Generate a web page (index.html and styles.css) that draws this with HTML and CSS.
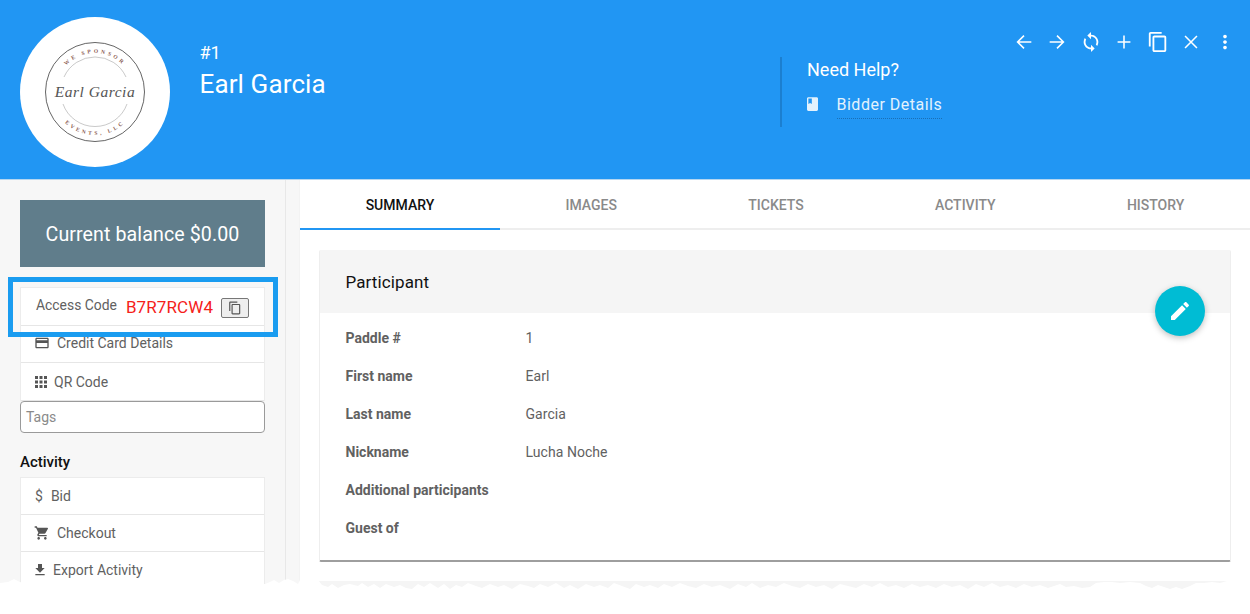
FILE: index.html
```html
<!DOCTYPE html>
<html lang="en">
<head>
<meta charset="utf-8">
<title>Earl Garcia</title>
<link rel="stylesheet" href="styles.css">
</head>
<body>
<div class="page">
  <header class="header">
    <div class="avatar">
      <svg class="logo" viewBox="0 0 100 100" width="100" height="100">
        <defs>
          <path id="arcTop" d="M11 50a39 39 0 0 1 78 0"/>
          <path id="arcBottom" d="M7 50a43 43 0 0 0 86 0"/>
        </defs>
        <circle class="logo-ring" cx="50" cy="50" r="49.500"/>
        <path class="logo-thin" d="M19 35a34 34 0 0 1 62 0M18 62a34 34 0 0 0 64 0"/>
        <text class="logo-small"><textPath href="#arcTop" startOffset="50%" text-anchor="middle">WE SPONSOR</textPath></text>
        <text class="logo-small"><textPath href="#arcBottom" startOffset="50%" text-anchor="middle">EVENTS, LLC</textPath></text>
        <text class="logo-script" x="50" y="55" text-anchor="middle">Earl Garcia</text>
      </svg>
    </div>
    <div class="identity">
      <div class="paddle">#1</div>
      <h1 class="name">Earl Garcia</h1>
    </div>
    <div class="help">
      <div class="help-title">Need Help?</div>
      <div class="help-link">
        <svg class="book" viewBox="4 2 16 20" width="11" height="14"><path d="M18 2H6c-1.100 0-2 .9-2 2v16c0 1.100.9 2 2 2h12c1.100 0 2-.9 2-2V4c0-1.100-.9-2-2-2zM6 4h5v8l-2.500-1.500L6 12V4z" fill="currentColor" fill-rule="evenodd"/></svg>
        <span class="link-text">Bidder Details</span>
      </div>
    </div>
    <nav class="toolbar">
      <svg class="tool" viewBox="0 0 24 24"><path class="tool-line" d="M20 12H5M12 5l-7 7 7 7"/></svg>
      <svg class="tool" viewBox="0 0 24 24"><path class="tool-line" d="M4 12h15M12 5l7 7-7 7"/></svg>
      <svg class="tool" viewBox="0 0 24 24"><path class="tool-fill" d="M12 4V1L8 5l4 4V6c3.310 0 6 2.690 6 6 0 1.010-.25 1.970-.7 2.800l1.460 1.460C19.540 15.030 20 13.570 20 12c0-4.420-3.580-8-8-8zm0 14c-3.310 0-6-2.690-6-6 0-1.010.25-1.970.7-2.800L5.240 7.740C4.460 8.970 4 10.430 4 12c0 4.420 3.580 8 8 8v3l4-4-4-4v3z"/></svg>
      <svg class="tool" viewBox="0 0 24 24"><path class="tool-line" d="M12 5v14M5 12h14"/></svg>
      <svg class="tool" viewBox="0 0 24 24"><path class="tool-fill" d="M16 1H4c-1.100 0-2 .9-2 2v14h2V3h12V1zm3 4H8c-1.100 0-2 .9-2 2v14c0 1.100.9 2 2 2h11c1.100 0 2-.9 2-2V7c0-1.100-.9-2-2-2zm0 16H8V7h11v14z"/></svg>
      <svg class="tool" viewBox="0 0 24 24"><path class="tool-line" d="M5.500 5.500l13 13M18.500 5.500l-13 13"/></svg>
      <svg class="tool" viewBox="0 0 24 24"><path class="tool-fill" d="M12 8c1.100 0 2-.9 2-2s-.9-2-2-2-2 .9-2 2 .9 2 2 2zm0 2c-1.100 0-2 .9-2 2s.9 2 2 2 2-.9 2-2-.9-2-2-2zm0 6c-1.100 0-2 .9-2 2s.9 2 2 2 2-.9 2-2-.9-2-2-2z"/></svg>
    </nav>
  </header>

  <div class="body">
    <aside class="sidebar">
      <div class="side-inner">
        <div class="balance">Current balance $0.00</div>
        <ul class="list first-list">
          <li class="item code-item">
            <span class="code-label">Access Code</span>
            <span class="code">B7R7RCW4</span>
            <button class="copy" type="button" aria-label="Copy">
              <svg viewBox="0 0 24 24" width="14" height="14"><path d="M16 1H4c-1.100 0-2 .9-2 2v14h2V3h12V1zm3 4H8c-1.100 0-2 .9-2 2v14c0 1.100.9 2 2 2h11c1.100 0 2-.9 2-2V7c0-1.100-.9-2-2-2zm0 16H8V7h11v14z" fill="#555"/></svg>
            </button>
          </li>
          <li class="item card-item credit-item">
            <svg class="icon" viewBox="0 0 24 24" width="16" height="16"><path d="M20 4H4c-1.110 0-1.990.89-1.990 2L2 18c0 1.110.89 2 2 2h16c1.110 0 2-.89 2-2V6c0-1.110-.89-2-2-2zm0 14H4v-6h16v6zm0-10H4V6h16v2z"/></svg>
            <span>Credit Card Details</span>
          </li>
          <li class="item qr-item">
            <svg class="icon" viewBox="0 0 24 24" width="18" height="18"><path d="M4 8h4V4H4v4zm6 12h4v-4h-4v4zm-6 0h4v-4H4v4zm0-6h4v-4H4v4zm6 0h4v-4h-4v4zm6-10v4h4V4h-4zm-6 4h4V4h-4v4zm6 6h4v-4h-4v4zm0 6h4v-4h-4v4z"/></svg>
            <span>QR Code</span>
          </li>
        </ul>
        <div class="tags">Tags</div>
        <h2 class="side-title">Activity</h2>
        <ul class="list">
          <li class="item bid-item"><span class="dollar">$</span><span>Bid</span></li>
          <li class="item card-item">
            <svg class="icon" viewBox="0 0 24 24" width="16" height="16"><path d="M7 18c-1.100 0-1.990.9-1.990 2S5.900 22 7 22s2-.9 2-2-.9-2-2-2zM1 2v2h2l3.600 7.590-1.350 2.450c-.16.28-.25.61-.25.96 0 1.100.9 2 2 2h12v-2H7.420c-.14 0-.25-.11-.25-.25l.03-.12.9-1.630h7.450c.75 0 1.410-.41 1.750-1.030l3.580-6.490c.08-.14.12-.31.12-.48 0-.55-.45-1-1-1H5.210l-.94-2H1zm16 16c-1.100 0-1.990.9-1.990 2s.89 2 1.990 2 2-.9 2-2-.9-2-2-2z"/></svg>
            <span>Checkout</span>
          </li>
          <li class="item export-item">
            <svg class="icon" viewBox="0 0 24 24" width="16" height="16"><path d="M19 9h-4V3H9v6H5l7 7 7-7zM5 18v2h14v-2H5z"/></svg>
            <span>Export Activity</span>
          </li>
        </ul>
      </div>
    </aside>

    <main class="main">
      <div class="tabs">
        <div class="tab active">SUMMARY</div>
        <div class="tab">IMAGES</div>
        <div class="tab">TICKETS</div>
        <div class="tab">ACTIVITY</div>
        <div class="tab">HISTORY</div>
      </div>
      <div class="content">
        <section class="panel">
          <h2 class="panel-head">Participant</h2>
          <dl class="rows">
            <div class="row"><dt>Paddle #</dt><dd>1</dd></div>
            <div class="row"><dt>First name</dt><dd>Earl</dd></div>
            <div class="row"><dt>Last name</dt><dd>Garcia</dd></div>
            <div class="row"><dt>Nickname</dt><dd>Lucha Noche</dd></div>
            <div class="row"><dt>Additional participants</dt><dd></dd></div>
            <div class="row"><dt>Guest of</dt><dd></dd></div>
          </dl>
        </section>
        <div class="next-panel"></div>
      </div>
    </main>
  </div>

  <div class="highlight"></div>
  <button class="fab" type="button" aria-label="Edit">
    <svg viewBox="0 0 24 24" width="24" height="24"><path d="M3 17.250V21h3.750L17.810 9.940l-3.750-3.750L3 17.250zM20.710 7.040c.39-.39.39-1.020 0-1.410l-2.340-2.340c-.39-.39-1.020-.39-1.410 0l-1.830 1.830 3.750 3.750 1.830-1.830z" fill="#fff"/></svg>
  </button>
  <svg class="torn" viewBox="0 0 1250 36" width="1250" height="36" preserveAspectRatio="none">
    <polygon fill="#fff" points="0,5 8,4 14,1 20,4 26,6 265,6 270,4 274,2 279,5 284,2 288,1 293,3 298,6 300,2 318,2 322,7 328,9 332,6 338,10 344,7 350,6 358,8 362,5 368,9 374,6 380,10 386,6 394,9 400,7 406,10 412,11 418,6 424,9 430,5 438,10 444,6 450,11 456,7 462,9 468,5 476,8 482,10 490,6 498,9 504,7 512,11 520,6 528,8 534,10 540,6 548,9 556,5 564,10 570,7 578,11 586,6 594,9 600,7 608,10 614,5 622,8 630,11 636,6 644,9 650,7 658,10 664,6 672,9 680,5 688,8 696,10 704,6 712,9 720,7 730,11 738,6 746,9 752,5 760,10 768,7 776,9 784,5 792,8 800,10 808,6 816,9 824,7 832,11 840,6 848,8 856,10 864,6 872,9 880,5 888,9 896,7 904,10 912,6 920,9 928,7 936,10 944,6 952,9 960,7 968,11 976,6 984,9 992,5 1000,9 1008,7 1016,10 1024,6 1032,9 1040,7 1048,10 1054,8 1060,6 1066,9 1074,8 1082,10 1090,9 1096,5 1104,4 1112,4 1120,5 1130,4 1140,5 1146,8 1152,10 1158,7 1164,9 1170,11 1176,9 1182,11 1190,8 1196,5 1204,5 1212,4 1220,5 1227,3 1250,3 1250,36 0,36"/>
  </svg>
</div>
</body>
</html>
```
FILE: styles.css
```css
* { box-sizing: border-box; }
html, body { margin: 0; padding: 0; height: 100%; background: #fff; overflow: hidden; }
body { font-family: Roboto, "Liberation Sans", sans-serif; color: #616161; font-size: 14px; }
ul, dl, dd, h1, h2 { margin: 0; padding: 0; list-style: none; font-weight: 400; }

.page { position: relative; width: 1250px; height: 614px; overflow: hidden; display: flex; flex-direction: column; }

.header { height: 180px; flex: none; background: #2196f3; border-bottom: 1px solid #b5d6f0; color: #fff; display: flex; padding: 17px 0 0 20px; position: relative; }
.avatar { width: 150px; height: 150px; border-radius: 50%; background: #fff; display: flex; align-items: center; justify-content: center; flex: none; }
.logo-ring { fill: none; stroke: #222; stroke-width: .7; }
.logo-thin { fill: none; stroke: #777; stroke-width: .4; }
.logo-small { font-family: "Liberation Serif", serif; font-weight: 700; font-size: 5.500px; letter-spacing: 2.800px; fill: #8a5a50; }
.logo-script { font-family: "Liberation Serif", serif; font-style: italic; font-size: 15.500px; fill: #555; letter-spacing: .5px; }

.identity { margin-left: 30px; padding-top: 25px; width: 580px; flex: none; }
.paddle { font-size: 18px; line-height: 22px; margin-left: -.5px; }
.name { font-size: 26px; line-height: 38px; margin-top: 1px; margin-left: -.5px; letter-spacing: .12px; }

.help { width: 240px; height: 70px; margin-top: 40px; border-left: 2px solid #1b7fd0; padding: 0 0 0 25px; flex: none; }
.help-title { font-size: 18px; line-height: 24px; margin-top: 1px; }
.help-link { display: flex; align-items: flex-start; margin-top: 13px; color: #e3f2fd; }
.book { margin-top: 2px; margin-left: -.5px; flex: none; }
.link-text { margin-left: 19px; font-size: 16px; line-height: 20px; padding-bottom: 3px; border-bottom: 1px dotted #1a6fb5; letter-spacing: .5px; }

.toolbar { position: absolute; top: 31px; left: 1012.500px; display: flex; gap: 11.500px; }
.tool { width: 22px; height: 22px; display: block; }
.tool-line { fill: none; stroke: #fff; stroke-width: 1.700; }
.tool-fill { fill: #fff; }

.body { flex: 1; display: flex; min-height: 0; }

.sidebar { width: 300px; flex: none; background: #f7f7f7; border-right: 1px solid #f3f3f3; padding: 0 15px 0 0; }
.side-inner { height: 100%; border-right: 1px solid #e8e8e8; padding: 20px 20px 0 20px; width: 286px; }
.balance { height: 67px; padding-top: 1px; background: #607d8b; color: #fff; font-size: 19.600px; display: flex; align-items: center; justify-content: center; letter-spacing: .1px; }
.first-list { margin-top: 20px; }

.list { border: 1px solid #ececec; border-bottom: 0; background: #fff; }
.item { height: 37px; display: flex; align-items: center; padding-left: 14px; border-bottom: 1px solid #e6e6e6; font-size: 14px; color: #616161; white-space: nowrap; }
.code-item { height: 38px; padding-left: 15px; }
.code-label { margin-top: -3px; font-size: 13.900px; }
.code { color: #f5211a; font-size: 17px; margin-left: 9px; letter-spacing: .1px; }
.copy { width: 28px; height: 20px; margin-left: 8px; background: #eee; border: 1px solid #777; border-radius: 2px; padding: 0; display: flex; align-items: center; justify-content: center; margin-top: 3px; }
.credit-item { padding-bottom: 2px; }
.qr-item { height: 38px; }
.icon { fill: #555; flex: none; }
.card-item .icon { margin-right: 7px; margin-left: -1px; }
.qr-item .icon { margin-right: 4px; margin-left: -3px; }
.export-item .icon { margin-right: 5px; margin-left: -3px; }
.dollar { margin-right: 8px; }

.tags { height: 32px; border: 1px solid #9a9a9a; border-radius: 4px; background: #fff; color: #8a8a8a; font-size: 14px; line-height: 30px; padding-left: 5px; }
.side-title { font-size: 15px; font-weight: 500; color: #111; line-height: 20px; margin-top: 19px; margin-bottom: 5px; }

.main { flex: 1; min-width: 0; background: #fff; }
.tabs { height: 50px; display: flex; border-bottom: 2px solid #eee; }
.tab { flex: 1 1 auto; padding: 0 65.500px; margin-bottom: -2px; height: 50px; font-size: 14px; font-weight: 500; color: #8a8a8a; text-align: center; line-height: 50px; border-bottom: 2px solid transparent; }
.tab.active { color: #111; border-bottom-color: #2196f3; }

.content { padding: 20px 19px 0 19px; }
.panel { border: 1px solid #eee; border-top: 0; border-bottom: 2px solid #9e9e9e; border-radius: 2px; height: 312px; background: #fff; }
.panel-head { height: 63px; background: #f5f5f5; color: #111; font-size: 17px; letter-spacing: .1px; line-height: 65px; padding-left: 25.500px; }
.rows { padding-top: 6px; }
.row { height: 38px; display: flex; align-items: center; padding-left: 25.500px; }
.row dt { width: 180px; font-weight: 700; color: #616161; font-size: 14px; }
.row dd { color: #616161; font-size: 14px; letter-spacing: .05px; }

.next-panel { height: 20px; margin-top: 19px; background: #f5f5f5; }

.highlight { position: absolute; left: 8px; top: 277px; width: 270px; height: 60px; border: 5px solid #1a9cf0; }
.fab { position: absolute; left: 1155px; top: 286px; width: 50px; height: 50px; border: 0; border-radius: 50%; background: #00bcd4; box-shadow: 0 2px 6px rgba(0,0,0,.25); padding: 0; display: flex; align-items: center; justify-content: center; }
.torn { position: absolute; left: 0; bottom: 0; display: block; }
```
